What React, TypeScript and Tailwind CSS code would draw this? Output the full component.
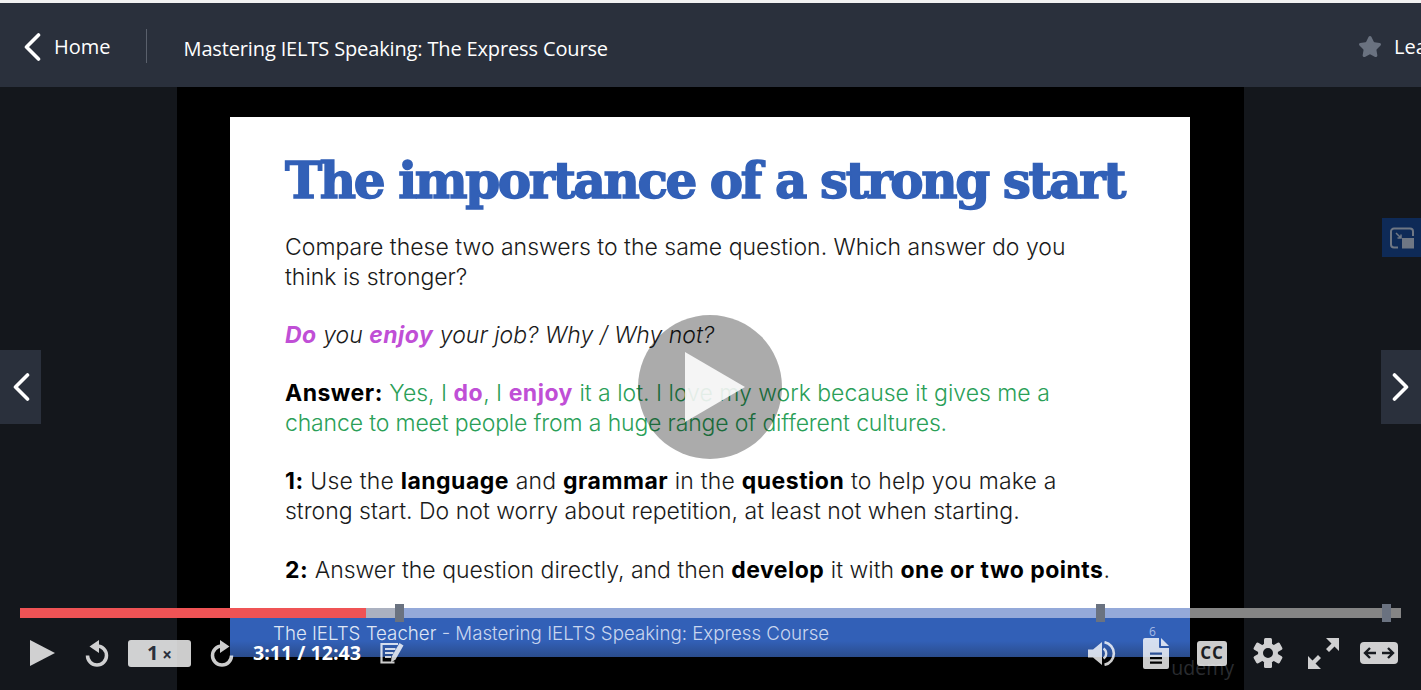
import type { ReactNode } from 'react';
import { Star } from 'lucide-react';

function Strong({ children, color = 'text-black' }: { children: ReactNode; color?: string }) {
  return <span className={`font-bold tracking-[0.5px] ${color}`}>{children}</span>;
}

function BigChevron({ right = false, className = '' }: { right?: boolean; className?: string }) {
  return (
    <svg width="18" height="28" viewBox="0 0 18 28" className={`${right ? '-scale-x-100' : ''} ${className}`}>
      <path d="M15.500 2L3.500 14L15.500 26" fill="none" stroke="#fff" strokeWidth="3.600" strokeLinecap="round" strokeLinejoin="round" />
    </svg>
  );
}

function ReplayIcon({ flip = false }: { flip?: boolean }) {
  return (
    <svg width="24" height="27" viewBox="0 0 24 27" className={`opacity-80 ${flip ? '-scale-x-100' : ''}`}>
      <path d="M12 6A9.500 9.500 0 1 1 2.500 15.500" fill="none" stroke="currentColor" strokeWidth="3.500" />
      <path d="M4.500 6.500L14 0V13Z" fill="currentColor" />
    </svg>
  );
}

function NotesIcon() {
  return (
    <svg width="24" height="22" viewBox="0 0 24 22" className="opacity-80">
      <path d="M18 2H1.500v18.500h13" fill="none" stroke="currentColor" strokeWidth="2.200" />
      <path d="M5 7h10.500M5 11h8.500M5 15h6" stroke="currentColor" strokeWidth="2.200" />
      <path d="M19.500 1l4 2.500-8 14-4.500 3 .5-5.500z" fill="currentColor" />
    </svg>
  );
}

function VolumeIcon() {
  return (
    <svg width="28" height="25" viewBox="0 0 28 25" className="opacity-80">
      <path d="M0 8.500h5L14 1v23l-9-7.500H0z" fill="currentColor" />
      <path d="M15.500 7.500a6 6 0 0 1 0 10" fill="none" stroke="currentColor" strokeWidth="2.400" />
      <path d="M16.500 1.200a11.500 11.500 0 0 1 0 22.600" fill="none" stroke="currentColor" strokeWidth="2.600" />
    </svg>
  );
}

function TranscriptIcon() {
  return (
    <svg width="26" height="31" viewBox="0 0 26 31" className="opacity-80">
      <path
        fillRule="evenodd"
        fill="currentColor"
        d="M2 0h14v9a1 1 0 0 0 1 1h9v19a2 2 0 0 1-2 2H2a2 2 0 0 1-2-2V2a2 2 0 0 1 2-2zM7 14.500v2.300h12v-2.300zM7 19v2.300h12V19zM7 23.500v2.300h12v-2.300z"
      />
      <path d="M18 0l8 8h-8z" fill="currentColor" />
    </svg>
  );
}

function GearIcon() {
  return (
    <svg width="30" height="30" viewBox="-15 -15 30 30" className="opacity-80">
      <circle r="7.500" fill="none" stroke="currentColor" strokeWidth="5" />
      {[0, 60, 120, 180, 240, 300].map((deg) => (
        <rect key={deg} x="-4" y="-15" width="8" height="7" rx="1.500" fill="currentColor" transform={`rotate(${deg})`} />
      ))}
    </svg>
  );
}

function ExpandIcon() {
  return (
    <svg width="31" height="31" viewBox="0 0 31 31" className="opacity-80">
      <path d="M18 0h13v13l-4.500-4.500-5.500 5.500-3-3 5.500-5.500z" fill="currentColor" />
      <path d="M13 31H0V18l4.500 4.500 5.500-5.500 3 3-5.500 5.500z" fill="currentColor" />
    </svg>
  );
}

function WideIcon() {
  return (
    <svg width="38" height="22" viewBox="0 0 38 22" className="opacity-80">
      <path fill="currentColor" d="M4 0h30a4 4 0 0 1 4 4v14a4 4 0 0 1-4 4H4a4 4 0 0 1-4-4V4a4 4 0 0 1 4-4z" />
      <path d="M16 11H5M10 6l-5 5 5 5M22 11h11M28 6l5 5-5 5" fill="none" stroke="#1a1d22" strokeWidth="2.400" />
    </svg>
  );
}

export default function App() {
  return (
    <div className="w-[1421px] h-[690px] overflow-hidden flex flex-col bg-[#14171c] font-['Open_Sans',sans-serif]">
      <div className="h-[3px] bg-[#f1f1f1]" />
      {/* Top bar */}
      <header className="h-[84px] shrink-0 bg-[#2a303c] flex items-center overflow-hidden whitespace-nowrap text-white">
        <BigChevron className="ml-[23px] mt-[4px]" />
        <span className="ml-[13px] text-[20px] mt-[3px]">Home</span>
        <div className="ml-[35px] w-px h-[34px] mt-[2px] bg-[#5a606c]" />
        <span className="ml-[37px] text-[20px] tracking-[-0.14px] mt-[7px]">Mastering IELTS Speaking: The Express Course</span>
        <div className="ml-auto flex items-center shrink-0 w-[63px] mt-[3px]">
          <Star size={24} className="text-[#6a7280] fill-[#6a7280] shrink-0" />
          <span className="ml-[12px] text-[20px]">Lea</span>
        </div>
      </header>

      {/* Player */}
      <main className="relative flex-1 flex justify-center">
        <div className="w-[1067px] bg-black pt-[30px] pr-[1px] flex flex-col items-center">
          <div className="w-[960px] h-[500px] shrink-0 bg-white text-[#1a1a1a] pl-[55px] font-['Inter',sans-serif]">
            <h1 className="pt-[29px] text-[#3260b7] text-[50px] leading-[70px] font-bold font-['DejaVu_Serif',serif] whitespace-nowrap tracking-[-2.4px] [-webkit-text-stroke:1.5px_#3260b7]">
              The importance of a strong start
            </h1>
            <div className="text-[23px] leading-[30px] font-light whitespace-nowrap">
              <p className="mt-[16px]">
                Compare these two answers to the same question. Which answer do you
                <br />
                think is stronger?
              </p>
              <p className="mt-[28px] italic">
                <Strong color="text-[#c04fd6]">Do</Strong> you <Strong color="text-[#c04fd6]">enjoy</Strong> your job? Why / Why not?
              </p>
              <p className="mt-[28px] text-[#2b9f58]">
                <Strong>Answer:</Strong> Yes, I <Strong color="text-[#c04fd6]">do</Strong>, I{' '}
                <Strong color="text-[#c04fd6]">enjoy</Strong> it a lot. I love my work because it gives me a
                <br />
                <span className="tracking-[-0.15px]">chance to meet people from a huge range of different cultures.</span>
              </p>
              <p className="mt-[28px]">
                <span className="tracking-[0.2px]">
                  <Strong>1:</Strong> Use the <Strong>language</Strong> and <Strong>grammar</Strong> in the{' '}
                  <Strong>question</Strong> to help you make a
                </span>
                <br />
                strong start. Do not worry about repetition, at least not when starting.
              </p>
              <p className="mt-[29px]">
                <Strong>2:</Strong> Answer the question directly, and then <Strong>develop</Strong> it with{' '}
                <Strong>one or two points</Strong>.
              </p>
            </div>
          </div>
          <div className="w-[960px] h-[40px] shrink-0 bg-gradient-to-b from-[#3260b7] from-60% to-[#2a4c8c] pl-[43px] pt-[3px] text-[#c9d6ef] text-[18.7px] whitespace-nowrap font-['Inter',sans-serif] font-light">
            <span className="text-[#dfe6f5]">The IELTS Teacher</span> - Mastering IELTS Speaking: Express Course
          </div>
          <div className="self-end mr-[9px] text-[#2a2c30] text-[19.5px] leading-[22px]">udemy</div>
        </div>

        {/* Big play button */}
        <div className="absolute left-[638px] top-[228px] w-[144px] h-[144px] rounded-full bg-black/[0.33] flex items-center justify-center">
          <svg width="60" height="70" viewBox="0 0 60 70" className="ml-[10px]">
            <path d="M0 0L60 35L0 70Z" fill="#fff" fillOpacity="0.88" />
          </svg>
        </div>

        {/* Side arrows */}
        <div className="absolute left-0 top-[263px] w-[41px] h-[74px] bg-[#2a303c] flex items-center justify-center">
          <BigChevron />
        </div>
        <div className="absolute right-0 top-[263px] w-[40px] h-[74px] bg-[#2a303c] flex items-center justify-center">
          <BigChevron right />
        </div>

        {/* Picture in picture */}
        <div className="absolute right-0 top-[131px] w-[39px] h-[39px] bg-[#0e2a57] flex items-center justify-center">
          <svg width="24" height="22" viewBox="0 0 24 22" className="text-[#6f7784]">
            <path d="M8 20.500H4A3 3 0 0 1 1 17.500V4.500A3 3 0 0 1 4 1.500h16a3 3 0 0 1 3 3V9" fill="none" stroke="currentColor" strokeWidth="2" />
            <path d="M6 6l5 5M11 7.500V11H7.500" fill="none" stroke="currentColor" strokeWidth="1.500" />
            <rect x="12" y="11" width="12" height="10.500" fill="currentColor" />
          </svg>
        </div>

        {/* Controls overlay */}
        <div className="absolute left-0 right-0 bottom-0 h-[86px] text-white">
          <div className="relative mx-[20px] mt-[4px] h-[10px] flex bg-[#858585]">
            <div className="w-[346px] bg-[#ef5355]" />
            <div className="w-[32px] bg-[#abb1c0]" />
            <div className="w-[792px] bg-[#94a9d9]" />
            <div className="absolute left-[375px] -top-[4px] w-[9px] h-[18px] bg-[#6a7280]" />
            <div className="absolute left-[1076px] -top-[4px] w-[9px] h-[18px] bg-[#6a7280]" />
            <div className="absolute left-[1362px] -top-[4px] w-[9px] h-[18px] bg-[#6a7280]" />
          </div>
          <div className="relative flex items-center h-[40px] mt-[15px]">
            <svg width="25" height="26" viewBox="0 0 25 26" className="ml-[30px] opacity-80">
              <path d="M0 0L25 13L0 26Z" fill="currentColor" />
            </svg>
            <div className="ml-[30px]">
              <ReplayIcon />
            </div>
            <div className="ml-[19px] w-[63px] h-[27px] rounded-[3px] bg-white/80 flex items-center justify-center text-[#2a303c] font-bold">
              <span className="text-[20px] leading-none">1</span>
              <span className="text-[17px] leading-none ml-[4px] mt-[3px]">×</span>
            </div>
            <div className="ml-[19px]">
              <ReplayIcon flip />
            </div>
            <span className="ml-[19px] text-[19.6px] font-bold text-white whitespace-nowrap">3:11 / 12:43</span>
            <div className="ml-[19px]">
              <NotesIcon />
            </div>
            <div className="ml-auto flex items-center">
              <VolumeIcon />
              <div className="relative ml-[27px]">
                <TranscriptIcon />
                <span className="absolute -top-[13px] left-[6px] text-[12px] leading-[14px] text-[#a9bce6]">6</span>
              </div>
              <div className="ml-[28px] w-[30px] h-[25px] rounded-[3px] bg-white/80 text-[#1a1d22] font-bold text-[17px] tracking-[1px] flex items-center justify-center">
                CC
              </div>
              <div className="ml-[26px]">
                <GearIcon />
              </div>
              <div className="ml-[25px]">
                <ExpandIcon />
              </div>
              <div className="ml-[21px] mr-[23px]">
                <WideIcon />
              </div>
            </div>
          </div>
        </div>
      </main>
    </div>
  );
}
